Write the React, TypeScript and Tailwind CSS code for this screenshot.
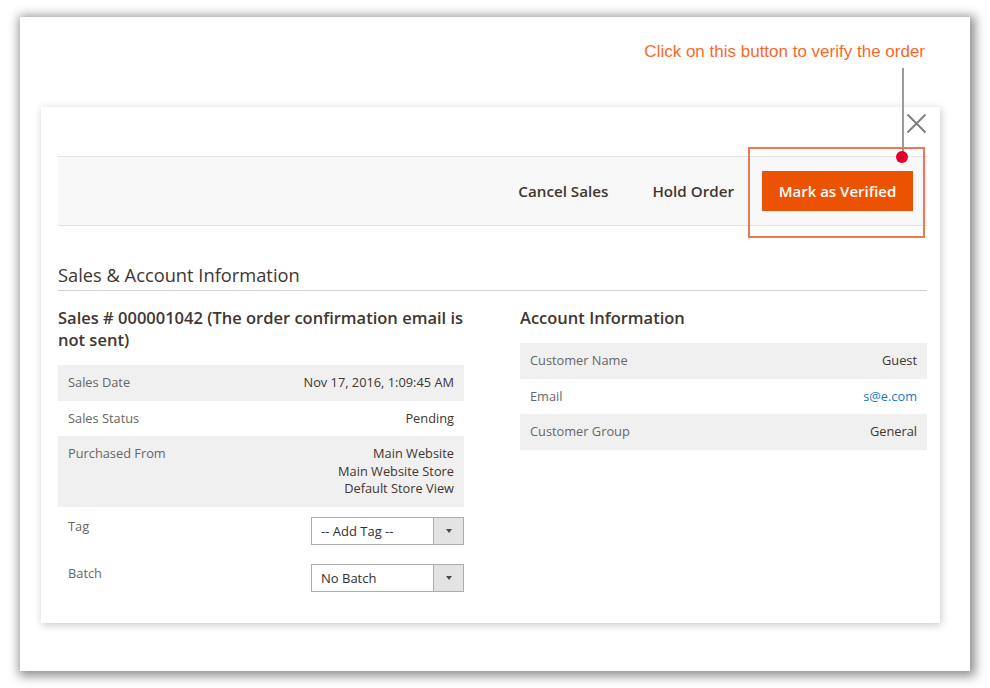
const leftRows = [
  { label: 'Sales Date', value: ['Nov 17, 2016, 1:09:45 AM'] },
  { label: 'Sales Status', value: ['Pending'] },
  {
    label: 'Purchased From',
    value: ['Main Website', 'Main Website Store', 'Default Store View'],
  },
];

const accountRows = [
  { label: 'Customer Name', value: 'Guest' },
  { label: 'Email', value: 's@e.com', link: true },
  { label: 'Customer Group', value: 'General' },
];

function SelectBox({ text }: { text: string }) {
  return (
    <div className="flex h-[28px] w-[153px] border border-[#adadad] bg-white">
      <div className="flex-1 pl-[9px] text-[13px] leading-[26px] text-[#303030]">
        {text}
      </div>
      <div className="flex w-[30px] items-center justify-center border-l border-[#adadad] bg-[#e3e3e3]">
        <span className="block h-0 w-0 border-x-[3.5px] border-t-[4px] border-x-transparent border-t-[#514943]" />
      </div>
    </div>
  );
}

export default function App() {
  return (
    <div
      className="h-[688px] w-[990px] overflow-hidden bg-white pl-[20px] pt-[17px]"
      style={{ fontFamily: '"Open Sans", "Liberation Sans", sans-serif' }}
    >
      <div className="relative h-[654px] w-[950px] bg-white shadow-[2px_2px_10px_3px_rgba(0,0,0,0.45)]">
        {/* annotation */}
        <div
          className="absolute right-[45px] top-[25px] text-[17px] leading-[20px] text-[#f7692b]"
          style={{ fontFamily: '"Liberation Sans", Arial, sans-serif' }}
        >
          Click on this button to verify the order
        </div>
        <div className="absolute left-[882px] top-[51px] z-10 h-[90px] w-[2px] bg-[#9a9a9a]" />
        <div className="absolute left-[876px] top-[134px] z-20 h-[12px] w-[12px] rounded-full bg-[#e2002a]" />
        <div className="absolute left-[728px] top-[130px] z-10 h-[91px] w-[177px] border-2 border-[#ef7656]" />

        <div className="ml-[21px] pt-[90px]">
          <div className="relative h-[516px] w-[899px] bg-white pl-[17px] pr-[13px] pt-[49px] shadow-[1px_2px_8px_rgba(0,0,0,0.22)]">
            <button className="absolute right-[13px] top-[6px] p-0">
              <svg width="21" height="21" viewBox="0 0 21 21">
                <path
                  d="M1.5 1.5 L19.5 19.5 M19.5 1.5 L1.5 19.5"
                  stroke="#7d7a78"
                  strokeWidth="1.8"
                  fill="none"
                />
              </svg>
            </button>

            <div className="flex h-[70px] items-center justify-end border-y border-[#e3e3e3] bg-[#f8f8f8] pr-[14px] text-[15.2px] font-semibold text-[#41362f]">
              <span>Cancel Sales</span>
              <span className="ml-[44px]">Hold Order</span>
              <span className="ml-[28px] flex h-[40px] w-[151px] items-center justify-center bg-[#eb5202] text-[15px] text-white">
                Mark as Verified
              </span>
            </div>

            <div className="mt-[36px] border-b border-[#d1d1d1] pb-[2px] text-[18.3px] leading-[26px] text-[#41362f]">
              Sales &amp; Account Information
            </div>

            <div className="flex gap-[56px]">
              <div className="w-[406px]">
                <div className="mt-[16px] whitespace-nowrap text-[16.5px] font-semibold leading-[22px] text-[#41362f]">
                  Sales # 000001042 (The order confirmation email is
                  <br />
                  not sent)
                </div>
                <div className="mt-[14px] text-[12.8px] leading-[17.5px]">
                  {leftRows.map((row, i) => (
                    <div
                      key={row.label}
                      className={`flex justify-between px-[10px] py-[9px] ${
                        i % 2 === 0 ? 'bg-[#f0f0f0]' : 'bg-white'
                      }`}
                    >
                      <span className="text-[#666]">{row.label}</span>
                      <span className="text-right text-[#41362f]">
                        {row.value.map((v) => (
                          <div key={v}>{v}</div>
                        ))}
                      </span>
                    </div>
                  ))}
                  <div className="flex justify-between pl-[10px] pt-[10px]">
                    <span className="pt-[1px] text-[#666]">Tag</span>
                    <SelectBox text="-- Add Tag --" />
                  </div>
                  <div className="flex justify-between pl-[10px] pt-[19px]">
                    <span className="pt-[1px] text-[#666]">Batch</span>
                    <SelectBox text="No Batch" />
                  </div>
                </div>
              </div>

              <div className="flex-1">
                <div className="mt-[16px] text-[16.5px] font-semibold leading-[22px] text-[#41362f]">
                  Account Information
                </div>
                <div className="mt-[14px] text-[12.8px] leading-[17.5px]">
                  {accountRows.map((row, i) => (
                    <div
                      key={row.label}
                      className={`flex justify-between px-[10px] py-[9px] ${
                        i % 2 === 0 ? 'bg-[#f0f0f0]' : 'bg-white'
                      }`}
                    >
                      <span className="text-[#666]">{row.label}</span>
                      <span
                        className={row.link ? 'text-[#1979c3]' : 'text-[#41362f]'}
                      >
                        {row.value}
                      </span>
                    </div>
                  ))}
                </div>
              </div>
            </div>
          </div>
        </div>
      </div>
    </div>
  );
}
